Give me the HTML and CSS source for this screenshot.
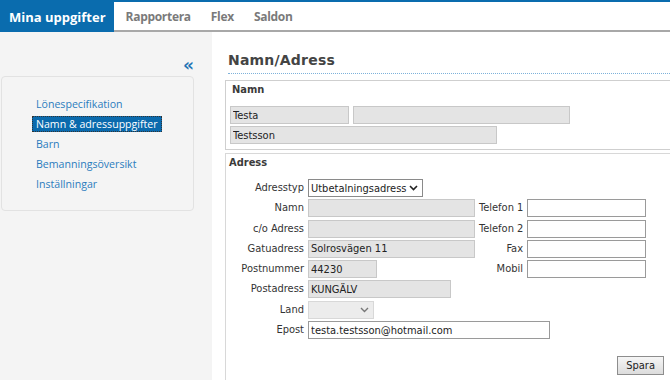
FILE: index.html
```html
<!DOCTYPE html>
<html lang="sv">
<head>
    <meta charset="UTF-8">
    <title>Mina uppgifter - Namn/Adress</title>
    <link rel="stylesheet" href="styles.css">
</head>
<body>
<!-- toppmeny -->
<div class="topnav">
    <a class="tab active">Mina uppgifter</a>
    <a class="tab">Rapportera</a>
    <a class="tab">Flex</a>
    <a class="tab">Saldon</a>
</div>

<div class="page">
    <!-- vänstermeny -->
    <div class="sidebar">
        <div class="collapse">&laquo;</div>
        <div class="menu-box">
            <a class="menu-link">Lönespecifikation</a>
            <a class="menu-link selected">Namn &amp; adressuppgifter</a>
            <a class="menu-link">Barn</a>
            <a class="menu-link">Bemanningsöversikt</a>
            <a class="menu-link">Inställningar</a>
        </div>
    </div>

    <!-- innehåll -->
    <div class="main">
        <h1 class="page-title">Namn/Adress</h1>

        <div class="box">
            <div class="box-title">Namn</div>
            <div class="name-rows">
                <div class="name-row">
                    <input class="field w118" type="text" value="Testa" disabled>
                    <input class="field w217" type="text" value="" disabled>
                </div>
                <div class="name-row">
                    <input class="field w267" type="text" value="Testsson" disabled>
                </div>
            </div>
        </div>

        <div class="box box-address">
            <div class="box-title">Adress</div>
            <div class="form-grid">
                <label>Adresstyp</label>
                <span class="select-wrap w115">
                    <select class="select">
                        <option>Utbetalningsadress</option>
                    </select>
                    <svg class="chevron" width="9" height="6" viewBox="0 0 9 6"><path d="M1 1l3.5 3.5L8 1" fill="none" stroke="#222" stroke-width="1.6"/></svg>
                </span>
                <span></span><span></span>

                <label>Namn</label>
                <input class="field w167" type="text" disabled>
                <label>Telefon 1</label>
                <input class="field white w119" type="text">

                <label>c/o Adress</label>
                <input class="field w167" type="text" disabled>
                <label>Telefon 2</label>
                <input class="field white w119" type="text">

                <label>Gatuadress</label>
                <input class="field w167" type="text" value="Solrosvägen 11" disabled>
                <label>Fax</label>
                <input class="field white w119" type="text">

                <label>Postnummer</label>
                <input class="field w69" type="text" value="44230" disabled>
                <label>Mobil</label>
                <input class="field white w119" type="text">

                <label>Postadress</label>
                <input class="field w143" type="text" value="KUNGÄLV" disabled>
                <span></span><span></span>

                <label>Land</label>
                <span class="select-wrap w66">
                    <select class="select" disabled>
                        <option></option>
                    </select>
                    <svg class="chevron" width="9" height="6" viewBox="0 0 9 6"><path d="M1 1l3.5 3.5L8 1" fill="none" stroke="#777" stroke-width="1.4"/></svg>
                </span>
                <span></span><span></span>

                <label>Epost</label>
                <input class="field white epost" type="text" value="testa.testsson@hotmail.com">
            </div>
            <div class="actions">
                <button class="btn">Spara</button>
            </div>
        </div>
    </div>
</div>
</body>
</html>
```

FILE: styles.css
```css
body {
    margin: 0;
    padding: 0;
    width: 670px;
    height: 380px;
    overflow: hidden;
    background-color: #fff;
    font-family: "DejaVu Sans Condensed", "DejaVu Sans", sans-serif;
    font-stretch: condensed;
    font-size: 11px;
    color: #333;
}

/* toppmeny */
.topnav {
    display: flex;
    height: 28px;
    border-top: 2px solid #0a6cae;
    border-bottom: 2px solid #a8a8a8;
    font-family: "Open Sans", sans-serif;
    font-stretch: normal;
}

.tab {
    display: flex;
    align-items: center;
    padding: 0 10px;
    font-size: 12px;
    letter-spacing: -0.3px;
    font-weight: bold;
    color: #7a7a7a;
    cursor: pointer;
}

.tab.active {
    padding: 0 8px 0 9px;
    margin-right: 2px;
    margin-bottom: -2px;
    background-color: #0a6cae;
    color: #fff;
    font-size: 13px;
    letter-spacing: 0;
}

.page {
    display: flex;
    height: 348px;
    overflow: hidden;
}

/* vänstermeny */
.sidebar {
    width: 212px;
    flex-shrink: 0;
    background-color: #f4f4f4;
    padding-top: 24px;
    box-sizing: border-box;
}

.collapse {
    width: 194px;
    text-align: right;
    font-family: "DejaVu Sans", sans-serif;
    font-stretch: normal;
    font-size: 17px;
    font-weight: bold;
    line-height: 18px;
    color: #1f73b5;
}

.menu-box {
    display: flex;
    flex-direction: column;
    align-items: flex-start;
    width: 193px;
    margin: 2px 0 0 1px;
    padding: 17px 0 16px 30px;
    box-sizing: border-box;
    border: 1px solid #e2e2e2;
    border-radius: 4px;
    font-family: "Open Sans", sans-serif;
    font-stretch: normal;
    font-size: 10.6px;
}

.menu-link {
    padding: 0 3px;
    border: 1px dotted transparent;
    line-height: 18px;
    color: #2b7cbe;
    cursor: pointer;
}

.menu-link.selected {
    background-color: #0a6aad;
    border-color: #333;
    color: #fff;
    line-height: 14px;
    margin: 2px 0;
}

/* innehåll */
.main {
    flex: 1;
    min-width: 0;
    overflow: hidden;
    padding: 18px 0 0 13px;
}

.page-title {
    margin: 0 0 6px 3px;
    padding-bottom: 3px;
    border-bottom: 1px dotted #7eb2da;
    font-family: "DejaVu Sans", sans-serif;
    font-stretch: normal;
    font-size: 14px;
    letter-spacing: 0.2px;
    line-height: 20px;
    color: #444;
}

.box {
    width: 470px;
    border: 1px solid #cfcfcf;
    padding: 2px 0 5px 4px;
}

.box-address {
    margin-top: 3px;
    border-color: #d8d8d8;
    height: 240px;
    padding-left: 0;
}

.box-title {
    font-weight: bold;
    line-height: 14px;
    color: #3a3a3a;
    padding-left: 2px;
}

.box-address .box-title {
    padding-left: 3px;
}

.name-rows {
    display: flex;
    flex-direction: column;
    gap: 2px;
    margin-top: 9px;
}

.name-row {
    display: flex;
    gap: 4px;
}

/* fält */
.field {
    height: 18px;
    box-sizing: border-box;
    padding: 0 2px;
    border: 1px solid #c8c8c8;
    background-color: #e4e4e4;
    font-family: inherit;
    font-stretch: condensed;
    font-size: 11px;
    color: #222;
    outline: none;
}

.field.white {
    background-color: #fff;
    border-color: #9a9a9a;
}

.select-wrap {
    position: relative;
    display: block;
    height: 18px;
}

.select {
    appearance: none;
    -webkit-appearance: none;
    width: 100%;
    height: 18px;
    box-sizing: border-box;
    border: 1px solid #8a8a8a;
    border-radius: 0;
    background-color: #fff;
    font-family: inherit;
    font-stretch: condensed;
    font-size: 11px;
    color: #222;
    padding: 0 14px 0 2px;
}

.select:disabled {
    background-color: #e4e4e4;
    border-color: #c8c8c8;
}

.chevron {
    position: absolute;
    right: 5px;
    top: 6px;
    pointer-events: none;
}

.w66 { width: 66px; }
.w69 { width: 69px; }
.w115 { width: 115px; }
.w118 { width: 119px; }
.w119 { width: 119px; }
.w143 { width: 143px; }
.w167 { width: 167px; }
.w217 { width: 217px; }
.w267 { width: 267px; }

.form-grid {
    display: grid;
    grid-template-columns: 78px 167px 44px 119px;
    grid-auto-rows: 18px;
    column-gap: 4px;
    row-gap: 2.3px;
    margin-top: 9px;
}

.form-grid label {
    text-align: right;
    line-height: 18px;
    white-space: nowrap;
    color: #333;
}

.form-grid .field,
.form-grid .select-wrap {
    justify-self: start;
}

.epost {
    grid-column: 2 / 5;
    width: 242px;
}

.actions {
    width: 438px;
    display: flex;
    justify-content: flex-end;
    margin-top: 17px;
}

.btn {
    height: 19px;
    padding: 0 8px;
    border: 1px solid #8d8d8d;
    border-radius: 0;
    background: linear-gradient(#f6f6f6, #dcdcdc);
    font-family: inherit;
    font-stretch: condensed;
    font-size: 11px;
    color: #222;
}
```
